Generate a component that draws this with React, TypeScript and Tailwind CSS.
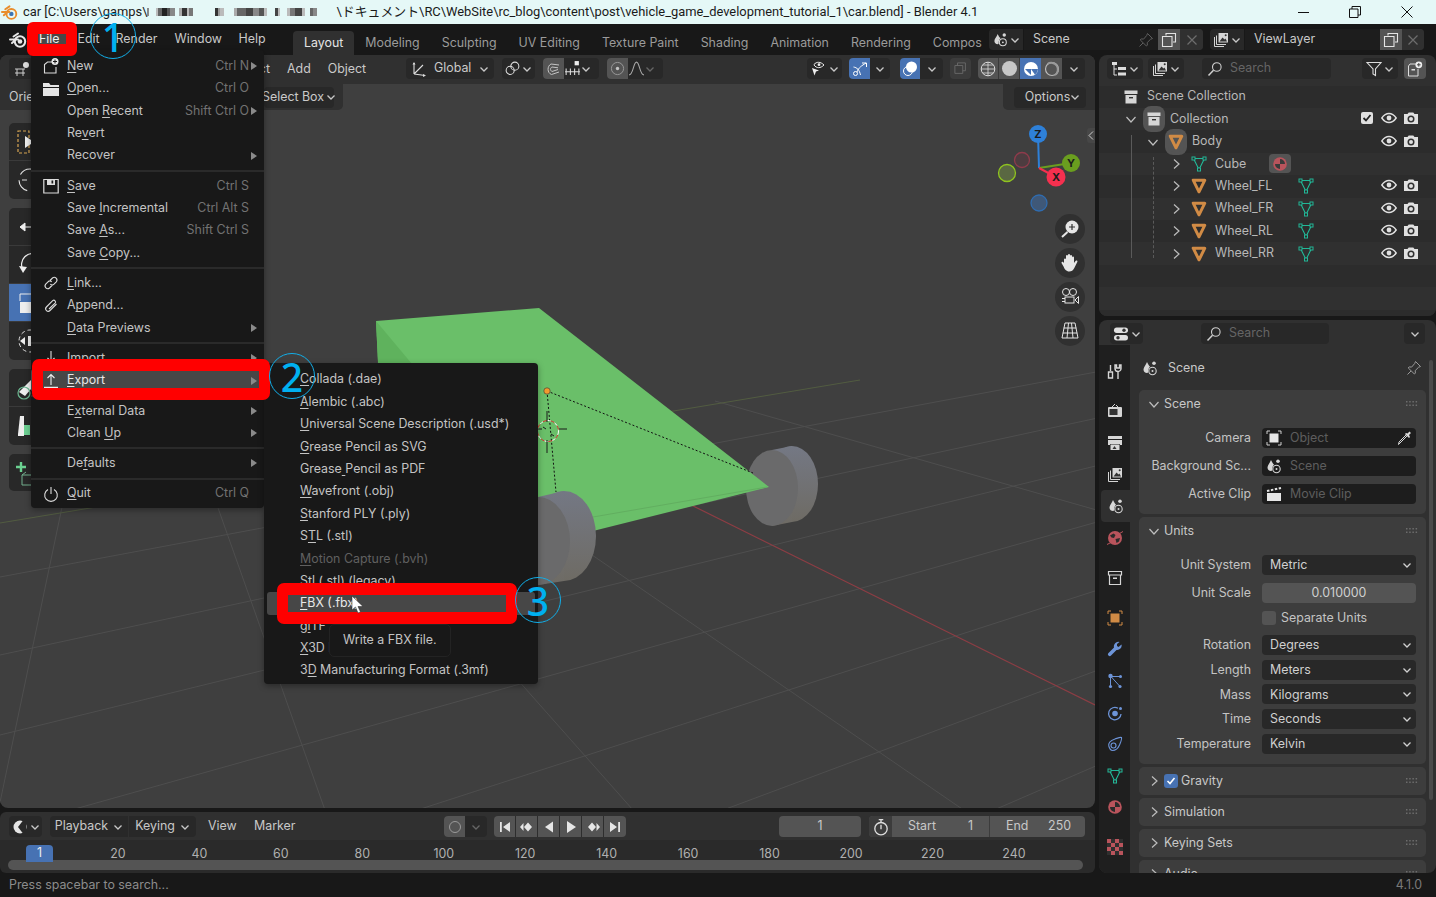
import { ReactNode } from "react";

// ---------- small drawing helpers ----------
function Ico({ s = 16, v = 16, children, className = "" }: { s?: number; v?: number; children: ReactNode; className?: string }) {
  return (
    <svg width={s} height={s} viewBox={`0 0 ${v} ${v}`} fill="none" className={`shrink-0 ${className}`}>
      {children}
    </svg>
  );
}

const W = "#d6d6d6";

function Caret({ c = "#c8c8c8", s = 10 }: { c?: string; s?: number }) {
  return (
    <Ico s={s} v={10}>
      <path d="M1.5 3.5 5 7l3.5-3.5" stroke={c} strokeWidth="1.3" />
    </Ico>
  );
}
function CaretRight({ c = "#bdbdbd" }: { c?: string }) {
  return (
    <Ico s={12} v={12}>
      <path d="M4 1.5 9 6l-5 4.500" stroke={c} strokeWidth="1.2" />
    </Ico>
  );
}
function CaretOpen({ c = "#bdbdbd" }: { c?: string }) {
  return (
    <Ico s={12} v={12}>
      <path d="M1.5 4 6 9l4.500-5" stroke={c} strokeWidth="1.2" />
    </Ico>
  );
}
function BlenderLogo({ c = "#e8e8e8", c2 = "#e8e8e8", s = 18 }: { c?: string; c2?: string; s?: number }) {
  return (
    <Ico s={s} v={18}>
      <circle cx="11" cy="10.5" r="5.2" stroke={c} strokeWidth="2" />
      <circle cx="11" cy="10.5" r="2.3" fill={c2} />
      <path d="M1 8.500h8M4.500 5.500l4.500-3M3 12l4-3.500" stroke={c} strokeWidth="2" strokeLinecap="round" />
    </Ico>
  );
}
function SceneIcon({ c = W, s = 16 }: { c?: string; s?: number }) {
  return (
    <Ico s={s}>
      <path d="M5 2C4 5 1.500 7 1.500 9.500 1.500 11.500 3 13 5 13c.7 0 1-.3 1-.8C6 9 7 8 8 6.500 6.800 5.500 5.800 3.800 5 2Z" fill={c} />
      <circle cx="12" cy="3.200" r="1.800" fill={c} />
      <circle cx="10.500" cy="11" r="3.700" stroke={c} strokeWidth="1.100" />
      <circle cx="10.500" cy="11" r="1" fill={c} />
    </Ico>
  );
}
function ViewLayerIcon({ c = W }: { c?: string }) {
  return (
    <Ico>
      <path d="M1.500 5v9.500H11" stroke={c} strokeWidth="1" />
      <path d="M3.500 3.500v9H13" stroke={c} strokeWidth="1" />
      <rect x="5.500" y="1" width="9.500" height="9.500" fill={c} />
      <path d="m6.500 9.500 3-4 2 2 1-1 1.500 3Z" fill="#333" />
      <circle cx="12.700" cy="3.200" r="1" fill="#333" />
    </Ico>
  );
}
function BoxIcon({ c = W, s = 16 }: { c?: string; s?: number }) {
  return (
    <Ico s={s}>
      <rect x="1.500" y="1.500" width="13" height="3.500" fill={c} />
      <path d="M2.500 6h11v8.500h-11Z" fill={c} />
      <rect x="6" y="8" width="4" height="1.400" fill="#303030" />
    </Ico>
  );
}
function MeshObj({ s = 16 }: { s?: number }) {
  return (
    <Ico s={s}>
      <path d="M2.200 2.200h11.600L8 13.800Z" stroke="#d18b45" strokeWidth="3" strokeLinejoin="round" />
    </Ico>
  );
}
function MeshData({ s = 16 }: { s?: number }) {
  const c = "#22b797";
  return (
    <Ico s={s}>
      <path d="M2.500 2.500h11L8 13.500Z" stroke={c} strokeWidth="1.100" />
      <rect x="1" y="1" width="3" height="3" fill="#2b2b2b" stroke={c} />
      <rect x="12" y="1" width="3" height="3" fill="#2b2b2b" stroke={c} />
      <rect x="6.500" y="12" width="3" height="3" fill="#2b2b2b" stroke={c} />
    </Ico>
  );
}
function MaterialIcon({ s = 16, c = "#b9545c", d = "#2a2a2a" }: { s?: number; c?: string; d?: string }) {
  return (
    <Ico s={s}>
      <circle cx="8" cy="8" r="6.800" fill={c} />
      <path d="M8 8V3a5 5 0 0 1 5 5ZM8 8v5a5 5 0 0 1-5-5Z" fill={d} />
    </Ico>
  );
}
function Eye() {
  return (
    <Ico>
      <path d="M.8 8C3 4.800 5.300 3.500 8 3.500S13 4.800 15.200 8C13 11.200 10.700 12.500 8 12.500S3 11.200.8 8Z" stroke="#e0e0e0" strokeWidth="1.400" />
      <circle cx="8" cy="8" r="2.400" fill="#e0e0e0" />
    </Ico>
  );
}
function Cam() {
  return (
    <Ico>
      <path d="M1 4h3.500l1.200-1.600h4.600L11.500 4H15v10H1Z" fill="#e0e0e0" />
      <circle cx="8" cy="9" r="3.500" fill="#303030" />
      <circle cx="8" cy="9" r="2" fill="#e0e0e0" />
    </Ico>
  );
}
function Grip() {
  return (
    <svg width="12" height="6" viewBox="0 0 12 6" className="shrink-0">
      {[0, 1].map((r) =>
        [0, 1, 2, 3].map((i) => <rect key={`${r}${i}`} x={i * 3.2} y={r * 3.5} width="1.500" height="1.500" fill="#6c6c6c" />),
      )}
    </svg>
  );
}
function SearchGlass() {
  return (
    <Ico>
      <circle cx="9.800" cy="6" r="4.300" stroke="#cfcfcf" strokeWidth="1.100" />
      <path d="M6.500 9.200 1.500 14.500" stroke="#cfcfcf" strokeWidth="1.500" />
    </Ico>
  );
}
function Pin({ c = "#9a9a9a" }: { c?: string }) {
  return (
    <Ico>
      <path d="M9.500 1.500l5 5-2 .8-3.300 3.300.2 2.400-1 1L2.200 7.900l1-1 2.400.2L8.700 3.500ZM5 11l-3.500 3.500" stroke={c} strokeWidth="1" />
    </Ico>
  );
}
function DupIcon() {
  return (
    <Ico>
      <path d="M5 3.500V1.500h9.500V10H12" stroke="#e4e4e4" strokeWidth="1.100" />
      <path d="M1.500 4.500H11V14.500H1.500Z" stroke="#e4e4e4" strokeWidth="1.100" />
    </Ico>
  );
}
function Cross({ c = "#6d6d6d" }: { c?: string }) {
  return (
    <Ico s={12} v={12}>
      <path d="M1.500 1.500l9 9m0-9-9 9" stroke={c} strokeWidth="1.200" />
    </Ico>
  );
}
function Dark({ className = "", children }: { className?: string; children?: ReactNode }) {
  return <div className={`flex h-[21px] items-center justify-center rounded-[4px] bg-[#282828] ${className}`}>{children}</div>;
}

// ---------- menus ----------
type Item = { l: string; u?: number; sc?: string; arrow?: boolean; icon?: ReactNode; dim?: boolean; on?: boolean };

function Label({ it }: { it: Item }) {
  if (it.u === undefined) return <span>{it.l}</span>;
  return (
    <span>
      {it.l.slice(0, it.u)}
      <span className="underline underline-offset-2">{it.l[it.u]}</span>
      {it.l.slice(it.u + 1)}
    </span>
  );
}

const icoStroke = { stroke: "#dcdcdc", strokeWidth: 1.1 };
const fileMenu: Item[][] = [
  [
    {
      l: "New",
      u: 0,
      sc: "Ctrl N",
      arrow: true,
      icon: (
        <Ico>
          <path d="M9 4H4.500L1.500 6.500V15H13V9" {...icoStroke} />
          <circle cx="12" cy="3.500" r="3.500" fill="#e8e8e8" />
          <path d="M12 1.500v4M10 3.500h4" stroke="#181818" strokeWidth="1" />
        </Ico>
      ),
    },
    {
      l: "Open...",
      u: 0,
      sc: "Ctrl O",
      icon: (
        <Ico>
          <path d="M0 2h6l1.500 2H16v2H0Z" fill="#e4e4e4" />
          <rect y="7" width="16" height="8" fill="#e4e4e4" />
        </Ico>
      ),
    },
    { l: "Open Recent", u: 5, sc: "Shift Ctrl O", arrow: true },
    { l: "Revert", u: 2 },
    { l: "Recover", arrow: true },
  ],
  [
    {
      l: "Save",
      u: 0,
      sc: "Ctrl S",
      icon: (
        <Ico>
          <path d="M.8 1.500h14.400v13.500H.8Z" stroke="#dcdcdc" strokeWidth="1.200" />
          <path d="M4 1.500h8v5.500H4Z" fill="#dcdcdc" />
          <rect x="8.500" y="2.500" width="1.700" height="3" fill="#181818" />
        </Ico>
      ),
    },
    { l: "Save Incremental", u: 5, sc: "Ctrl Alt S" },
    { l: "Save As...", u: 5, sc: "Shift Ctrl S" },
    { l: "Save Copy...", u: 5 },
  ],
  [
    {
      l: "Link...",
      u: 0,
      icon: (
        <Ico>
          <path d="M7 5.500 9.500 3a2.700 2.700 0 0 1 3.800 3.800L11 9.200a2.700 2.700 0 0 1-3.700 0M9 10.500 6.500 13a2.700 2.700 0 0 1-3.800-3.800L5 6.800a2.700 2.700 0 0 1 3.700 0" {...icoStroke} />
        </Ico>
      ),
    },
    {
      l: "Append...",
      u: 1,
      icon: (
        <Ico>
          <path d="M13.500 6 7 12.500a2.500 2.500 0 0 1-3.600-3.500l6.300-6.300a1.700 1.700 0 0 1 2.400 2.400L6 11" {...icoStroke} />
        </Ico>
      ),
    },
    { l: "Data Previews", u: 0, arrow: true },
  ],
  [
    {
      l: "Import",
      u: 0,
      arrow: true,
      icon: (
        <Ico>
          <path d="M8 1v10M4.500 8 8 11.500 11.500 8M1 13.500h14" {...icoStroke} />
        </Ico>
      ),
    },
    {
      l: "Export",
      u: 0,
      arrow: true,
      on: true,
      icon: (
        <Ico>
          <path d="M8 12V2M4.500 5 8 1.500 11.500 5" stroke="#eee" strokeWidth="1.100" />
          <path d="M1 14.500h14" stroke="#eee" strokeWidth="1.500" />
        </Ico>
      ),
    },
  ],
  [
    { l: "External Data", u: 1, arrow: true },
    { l: "Clean Up", u: 6, arrow: true },
  ],
  [{ l: "Defaults", u: 2, arrow: true }],
  [
    {
      l: "Quit",
      u: 0,
      sc: "Ctrl Q",
      icon: (
        <Ico>
          <path d="M5 3.500a6.300 6.300 0 1 0 6 0M8 1v7" {...icoStroke} />
        </Ico>
      ),
    },
  ],
];

const exportMenu: Item[] = [
  { l: "Collada (.dae)", u: 0 },
  { l: "Alembic (.abc)", u: 0 },
  { l: "Universal Scene Description (.usd*)", u: 0 },
  { l: "Grease Pencil as SVG", u: 0 },
  { l: "Grease Pencil as PDF", u: 6 },
  { l: "Wavefront (.obj)", u: 0 },
  { l: "Stanford PLY (.ply)", u: 0 },
  { l: "STL (.stl)", u: 1 },
  { l: "Motion Capture (.bvh)", u: 0, dim: true },
  { l: "Stl (.stl) (legacy)", u: 0 },
  { l: "FBX (.fbx)", u: 0, on: true },
  { l: "glTF 2.0 (.glb)", u: 1 },
  { l: "X3D Extensible 3D", u: 0 },
  { l: "3D Manufacturing Format (.3mf)", u: 1 },
];

function FileMenu() {
  return (
    <div className="absolute left-[31px] top-[50px] w-[233px] rounded-b-[4px] rounded-tr-[4px] bg-[#181818] pb-[3px] pt-[5px] shadow-[0_2px_6px_rgba(0,0,0,0.35)]">
      {fileMenu.map((group, gi) => (
        <div key={gi}>
          {gi > 0 && (
            <div className="flex h-[7.800px] items-center">
              <div className="h-[2px] w-full bg-[#2a2a2a]" />
            </div>
          )}
          {group.map((it) => (
            <div key={it.l} className={`flex h-[22.400px] items-center pl-[12px] pr-[6px] text-[12.400px] ${it.on ? "rounded-[3px] bg-[#474747] text-[#e8e8e8]" : "text-[#c4c4c4]"}`}>
              <div className="w-[24px]">{it.icon}</div>
              <Label it={it} />
              <span className={`ml-auto text-[#727272] ${it.sc && !it.arrow ? "mr-[9px]" : ""}`}>{it.sc}</span>
              {it.arrow && (
                <svg width="8" height="10" viewBox="0 0 8 10" className="ml-[1px] shrink-0">
                  <path d="M1 1l6 4-6 4Z" fill="#8a8a8a" />
                </svg>
              )}
            </div>
          ))}
        </div>
      ))}
    </div>
  );
}

function ExportMenu() {
  return (
    <div className="absolute left-[264px] top-[363px] w-[274px] rounded-[4px] bg-[#181818] pb-[2.500px] pt-[5.500px] shadow-[0_2px_6px_rgba(0,0,0,0.35)]">
      {exportMenu.map((it) => (
        <div key={it.l} className={`flex h-[22.400px] items-center whitespace-nowrap text-[12.400px] ${it.on ? "mx-[3px] rounded-[3px] bg-[#474747] pl-[33px] text-[#e8e8e8]" : it.dim ? "pl-[36px] text-[#606060]" : "pl-[36px] text-[#c4c4c4]"}`}>
          <Label it={it} />
        </div>
      ))}
    </div>
  );
}

// ---------- title + top bar ----------
const mosaic: [number, string][] = [
  [2, "#8a8a8a"], [7, "#ffffff00"], [2, "#bbb"], [4, "#666"], [5, "#222"], [3, "#555"], [5, "#888"], [4, "#ffffff00"], [3, "#aaa"], [5, "#333"], [2, "#bbb"], [4, "#777"], [22, "#ffffff00"],
  [3, "#333"], [2, "#999"], [4, "#bbb"], [10, "#ffffff00"], [3, "#aaa"], [9, "#666"], [7, "#444"], [6, "#888"], [5, "#555"], [3, "#bbb"], [8, "#ffffff00"], [3, "#444"], [2, "#bbb"], [7, "#ffffff00"], [3, "#bbb"], [5, "#777"], [7, "#444"], [3, "#bbb"], [5, "#ffffff00"], [3, "#666"], [4, "#888"],
];

function TitleBar() {
  return (
    <div className="flex h-[24px] items-center bg-[#e5f8f7] pl-[1px] text-[12.900px] text-[#1a1a1a] [font-family:Roboto,'Noto_Sans_CJK_JP',sans-serif]">
      <BlenderLogo c="#e98d2c" c2="#3a74b4" s={17} />
      <span className="ml-[5px] whitespace-nowrap">car [C:\Users\gamps\</span>
      <span className="flex h-[10px] w-[189px] items-center overflow-hidden">
        {mosaic.map(([w, c], i) => (
          <span key={i} className="h-[8px] shrink-0" style={{ width: w, background: c }} />
        ))}
      </span>
      <span className="whitespace-nowrap">\ドキュメント\RC\WebSite\rc_blog\content\post\vehicle_game_development_tutorial_1\car.blend] - Blender 4.1</span>
      <div className="ml-auto flex items-center">
        <div className="flex w-[51px] justify-center">
          <div className="h-px w-[11px] bg-[#111]" />
        </div>
        <div className="flex w-[52px] justify-center">
          <Ico s={12} v={12}>
            <path d="M.5 3h8.500v8.500H.5Z M3 3V.5h8.500V9H9" stroke="#111" strokeWidth="1" />
          </Ico>
        </div>
        <div className="mr-[3px] flex w-[52px] justify-center">
          <Ico s={12} v={12}>
            <path d="M.5.5l11 11m0-11-11 11" stroke="#111" strokeWidth="1" />
          </Ico>
        </div>
      </div>
    </div>
  );
}

const tabs = ["Layout", "Modeling", "Sculpting", "UV Editing", "Texture Paint", "Shading", "Animation", "Rendering", "Compositing"];

function SceneField({ icon, name, pin }: { icon: ReactNode; name: string; pin?: boolean }) {
  return (
    <div className="flex h-[21px] w-[214px] items-stretch overflow-hidden rounded-[4px] bg-[#282828]">
      <div className="flex w-[35px] items-center justify-center gap-[2px] border-r border-[#181818]">
        {icon}
        <Caret />
      </div>
      <div className={`flex items-center pl-[9px] pr-[4px] ${pin ? "w-[134px]" : "w-[135px]"} bg-[#1d1d1d]`}>
        <span>{name}</span>
        {pin && (
          <span className="ml-auto">
            <Pin c="#5e5e5e" />
          </span>
        )}
      </div>
      <div className="flex w-[22px] items-center justify-center bg-[#545454]">
        <DupIcon />
      </div>
      <div className="flex flex-1 items-center justify-center bg-[#303030]">
        <Cross />
      </div>
    </div>
  );
}

function TopBar() {
  return (
    <div className="flex h-[31px] items-center bg-[#181818] text-[12.400px] text-[#c9c9c9]">
      <div className="flex w-[30px] justify-center pl-[5px]">
        <BlenderLogo />
      </div>
      <div className="flex w-[263px] items-center">
        <span className="ml-[1px] rounded-[3px] bg-[#474747] px-[8px] text-[#f0f0f0]">File</span>
        <span className="ml-[10px] w-[38px]">Edit</span>
        <span className="w-[59px]">Render</span>
        <span className="w-[64px]">Window</span>
        <span>Help</span>
      </div>
      <div className="flex h-[24px] w-[689px] self-end overflow-hidden">
        {tabs.map((t, i) => (
          <div key={t} className={`flex items-center whitespace-nowrap rounded-t-[4px] px-[11px] ${i === 0 ? "bg-[#303030] text-[#e4e4e4]" : "text-[#9b9b9b]"}`}>
            {t}
          </div>
        ))}
      </div>
      <div className="ml-[7px] flex items-center gap-[7px]">
        <SceneField icon={<SceneIcon s={15} />} name="Scene" pin />
        <SceneField icon={<ViewLayerIcon />} name="ViewLayer" />
      </div>
    </div>
  );
}

// ---------- viewport ----------
function ToolGroup({ children }: { children: ReactNode }) {
  return <div className="flex w-[36px] flex-col overflow-hidden rounded-[5px] bg-[#282828]">{children}</div>;
}
function ToolBtn({ children, on }: { children: ReactNode; on?: boolean }) {
  return <div className={`flex h-[38px] items-center border-b border-[#3a3a3a] pl-[7px] last:border-b-0 ${on ? "bg-[#4772b3]" : ""}`}>{children}</div>;
}

// family of lines going to a vanishing point
const vpA = { x: 2700, y: 72 };
const vpB = { x: 120, y: 231 };
const gridA = [577, 655, 735, 830, 945, 1080, 1240];
const gridB = [-0.21, 0.354, 0.886, 1.457, 3.5, 6.2];

function Scene3D() {
  return (
    <svg width="1095" height="753" viewBox="0 55 1095 753" className="absolute inset-0">
      <defs>
        <linearGradient id="tread" x1="0" y1="0" x2="0" y2="1">
          <stop offset="0" stopColor="#747884" />
          <stop offset="1" stopColor="#6e6b64" />
        </linearGradient>
      </defs>
      <g stroke="#4e4e4e" strokeWidth="1">
        {gridA.map((c) => (
          <line key={c} x1="0" y1={c} x2="1095" y2={c - ((c - vpA.y) / vpA.x) * 1095} />
        ))}
        {gridB.map((k) => (
          <line key={k} x1={vpB.x + k * 170} y1={vpB.y + 170} x2={vpB.x + k * 600} y2={vpB.y + 600} />
        ))}
      </g>
      <line x1="0" y1="523" x2="860" y2="380" stroke="#525c41" strokeWidth="1" />
      <line x1="675" y1="497" x2="1095" y2="705" stroke="#8d3d44" strokeWidth="1.2" />

      {/* right wheel */}
      <ellipse cx="792" cy="484" rx="26" ry="38" fill="url(#tread)" />
      <path d="M772 450 792 446 792 522 772 526Z" fill="url(#tread)" />
      <ellipse cx="772" cy="488" rx="26" ry="38" fill="#6a6a6b" />

      {/* body */}
      <path d="M376 321 539 308 769 487 593 531 530 540 380 400Z" fill="#6abf69" />
      <path d="M376 321 412 364 378 364Z" fill="#5fb25d" />
      <path d="M593 517 767 487" stroke="#62ae60" strokeWidth="1" />

      {/* left wheel */}
      <ellipse cx="564" cy="536" rx="32" ry="45" fill="url(#tread)" />
      <path d="M538 497 564 491 564 581 538 585Z" fill="url(#tread)" />
      <ellipse cx="538" cy="541" rx="32" ry="44" fill="#6a6a6b" />

      {/* empties + 3d cursor */}
      <path d="M547 391 753 473M547 391 556 492" stroke="#111" strokeWidth="1" strokeDasharray="2 2" />
      <circle cx="547" cy="391" r="3.200" fill="#f29a2e" stroke="#333" strokeWidth="0.6" />
      <circle cx="548" cy="431" r="10.500" fill="none" stroke="#fff" strokeWidth="1" strokeDasharray="4 4" />
      <circle cx="548" cy="431" r="10.500" fill="none" stroke="#d33" strokeWidth="1" strokeDasharray="4 4" strokeDashoffset="4" />
      <path d="M547 411v11M547 440v13M559 429h8M536 429h6M543 427l3 2M551 434l3 2" stroke="#1a1a1a" strokeWidth="1" />

      {/* nav gizmo */}
      <line x1="1039" y1="168" x2="1038" y2="134" stroke="#2e80d8" strokeWidth="2" />
      <line x1="1039" y1="168" x2="1071" y2="163" stroke="#6a9e1f" strokeWidth="2" />
      <line x1="1039" y1="168" x2="1056" y2="177" stroke="#f5304f" strokeWidth="2" />
      <circle cx="1022" cy="160" r="7.500" fill="#4d3c40" stroke="#8e3b4b" strokeWidth="1.3" />
      <circle cx="1007" cy="173" r="8.500" fill="#5a6842" stroke="#8fc31f" strokeWidth="1.3" />
      <circle cx="1039" cy="203" r="8" fill="#3f5878" stroke="#2f6cb0" strokeWidth="1.3" />
      <circle cx="1038" cy="134" r="9" fill="#2e80d8" />
      <circle cx="1071" cy="163" r="9" fill="#6a9e1f" />
      <circle cx="1056" cy="177" r="9.500" fill="#f5304f" />
      <g fontSize="11" fontWeight="700" fill="#1c1c1c" textAnchor="middle" fontFamily="Inter">
        <text x="1038" y="138">Z</text>
        <text x="1071" y="167">Y</text>
        <text x="1056" y="181">X</text>
      </g>
    </svg>
  );
}

function NavBtn({ children }: { children: ReactNode }) {
  return <div className="flex size-[30px] items-center justify-center rounded-full bg-[#303030]">{children}</div>;
}

function Viewport() {
  return (
    <div className="relative flex flex-1 flex-col overflow-hidden rounded-[8px] bg-[#3f3f3f] text-[12.400px] text-[#cacaca]">
      <Scene3D />
      {/* header */}
      <div className="relative flex h-[29px] shrink-0 items-start bg-[#303030] pt-[3px] [&>*]:h-[21px] [&>span]:leading-[21px]">
        <Dark className="ml-[9px] w-[44px] justify-start pl-[5px]">
          <Ico>
            <circle cx="12" cy="4" r="3" fill="#ddd" />
            <path d="M1 8h10M3 8v7M9 8v7M1 12h10" stroke="#ccc" strokeWidth="1" />
          </Ico>
        </Dark>
        <div className="w-[217px] whitespace-nowrap text-right leading-[21px]">Select</div>
        <div className="flex w-[136px] gap-[17px] pl-[17px] leading-[21px]">
          <span>Add</span>
          <span>Object</span>
        </div>
        <Dark className="w-[88px] justify-start pl-[5px] pr-[5px]">
          <Ico>
            <path d="M3 13V2M3 13l11 1.500M3 13l9-9" stroke="#ddd" strokeWidth="1.100" />
            <path d="M3 1 1.500 3.500h3ZM15 14.500l-3-1.500v3Z" fill="#ddd" />
          </Ico>
          <span className="ml-[7px]">Global</span>
          <span className="ml-auto">
            <Caret />
          </span>
        </Dark>
        <Dark className="ml-[8px] w-[33px] gap-[2px]">
          <Ico s={15}>
            <circle cx="5.500" cy="10" r="4.300" stroke="#ddd" strokeWidth="1.100" />
            <circle cx="10.500" cy="5.500" r="4.300" stroke="#ddd" strokeWidth="1.100" />
          </Ico>
          <Caret />
        </Dark>
        <Dark className="ml-[8px] w-[56px] justify-start overflow-hidden">
          <div className="flex h-full w-[21px] items-center justify-center bg-[#545454]">
            <Ico s={16}>
              <path d="M13 11 5.500 13.500C1 12 1 5 5 3l8 1M12 8.500l-6 2C4 9.500 4 7 6 6l6 .8" stroke="#c4c4c4" strokeWidth="1" />
            </Ico>
          </div>
          <Ico s={17}>
            <rect x="10" y="1" width="4" height="4" fill="#eee" />
            <path d="M1 11h14M2 8v6M6 8v6M10 8v6M14 8v6" stroke="#ddd" strokeWidth="1" />
          </Ico>
          <Caret />
        </Dark>
        <Dark className="ml-[8px] w-[56px] justify-start overflow-hidden">
          <div className="flex h-full w-[21px] items-center justify-center bg-[#545454]">
            <Ico s={15}>
              <circle cx="8" cy="8" r="6.500" stroke="#9c9c9c" />
              <circle cx="8" cy="8" r="1.800" fill="#c4c4c4" />
            </Ico>
          </div>
          <Ico s={17}>
            <path d="M1 14C5 14 5 2 8 2s3 12 7 12" stroke="#aaa" strokeWidth="1" />
          </Ico>
          <Caret c="#666" />
        </Dark>
        <div className="ml-[144px] flex items-center">
          <Dark className="w-[35px] gap-[3px]">
            <Ico>
              <path d="M2 7l7 2.500-3 1-1.500 4Z" fill="#eee" />
              <path d="M4 3.500C6.500 .5 10.500 .5 14 4c-3.500 3.500-7.500 3.500-10 0Z" stroke="#eee" strokeWidth="1" />
              <circle cx="9" cy="3.700" r="1.400" fill="#eee" />
            </Ico>
            <Caret />
          </Dark>
          <Dark className="ml-[7px] w-[41px] overflow-hidden">
            <div className="flex h-full w-[21px] items-center justify-center bg-[#4772b3]">
              <Ico>
                <circle cx="3.500" cy="12.500" r="2" stroke="#fff" />
                <path d="M5 11C7 6 9.500 5 14 2M10 2h4.500v4M1.500 6c3.500 .5 6 3 7 8" stroke="#fff" strokeWidth="1" />
              </Ico>
            </div>
            <div className="flex flex-1 justify-center">
              <Caret />
            </div>
          </Dark>
          <Dark className="ml-[10px] w-[43px] overflow-hidden">
            <div className="flex h-full w-[20px] items-center justify-center bg-[#4772b3]">
              <Ico>
                <circle cx="6" cy="10" r="4.500" stroke="#fff" />
                <circle cx="9.500" cy="6" r="5.500" fill="#fff" />
              </Ico>
            </div>
            <div className="flex flex-1 justify-center">
              <Caret />
            </div>
          </Dark>
          <div className="ml-[7px] flex h-[21px] w-[21px] items-center justify-center rounded-[4px] bg-[#3c3c3c]">
            <Ico s={14}>
              <path d="M4 4V1h9v9h-3M1 4h9v9H1Z" stroke="#6c6c6c" />
            </Ico>
          </div>
          <div className="ml-[7px] flex h-[21px] w-[107px] items-stretch overflow-hidden rounded-[4px] bg-[#282828]">
            <div className="flex w-[21px] items-center justify-center border-r border-[#3a3a3a] bg-[#545454]">
              <Ico>
                <circle cx="8" cy="8" r="6.800" stroke="#ddd" />
                <path d="M1.200 8h13.600M8 1.200v13.600M3 4h10M3 12h10" stroke="#ddd" strokeWidth="0.8" />
              </Ico>
            </div>
            <div className="flex w-[21px] items-center justify-center border-r border-[#3a3a3a] bg-[#545454]">
              <div className="size-[15px] rounded-full bg-[#c8c8c8]" />
            </div>
            <div className="flex w-[21px] items-center justify-center bg-[#4772b3]">
              <Ico>
                <circle cx="8" cy="8" r="7" fill="#fff" />
                <path d="M8 8h7a7 7 0 0 1-3 5.700ZM2 8h6v6" fill="#4772b3" />
              </Ico>
            </div>
            <div className="flex w-[21px] items-center justify-center bg-[#545454]">
              <Ico>
                <circle cx="8" cy="8" r="6.500" stroke="#bbb" strokeWidth="1.200" />
                <path d="M11 14A6.500 6.500 0 0 0 3.500 3" stroke="#999" strokeWidth="2" />
              </Ico>
            </div>
            <div className="flex flex-1 items-center justify-center">
              <Caret />
            </div>
          </div>
        </div>
      </div>

      {/* tool settings */}
      <div className="relative flex h-[26px] shrink-0 items-stretch justify-between">
        <div className="flex w-[343px] items-center rounded-br-[5px] bg-[#303030] pl-[9px]">
          <span>Orientation</span>
          <Dark className="ml-auto mr-[9px] h-[20px] w-[70px] gap-[2px]">
            <span className="whitespace-nowrap">Select Box</span>
            <Caret />
          </Dark>
        </div>
        <div className="flex w-[92px] items-center justify-end rounded-bl-[5px] bg-[#303030] pr-[9px]">
          <Dark className="h-[20px] w-[72px] justify-between pl-[8px] pr-[3px]">
            <span>Options</span>
            <Caret />
          </Dark>
        </div>
      </div>

      {/* toolbar + nav buttons */}
      <div className="relative flex flex-1 justify-between">
        <div className="flex flex-col gap-[9px] pl-[9px] pt-[13px]">
          <ToolGroup>
            <ToolBtn>
              <Ico s={24} v={24}>
                <rect x="2" y="1" width="11" height="22" stroke="#d8a552" strokeWidth="1.2" strokeDasharray="3 2" />
                <path d="M9 6l9 6-9 6Z" fill="#eee" />
              </Ico>
            </ToolBtn>
            <ToolBtn>
              <Ico s={24} v={24}>
                <circle cx="14" cy="12" r="11" stroke="#e6e6e6" strokeWidth="1.1" strokeDasharray="14 6" />
                <path d="M6 12h5" stroke="#ddd" strokeWidth="1.1" />
              </Ico>
            </ToolBtn>
          </ToolGroup>
          <ToolGroup>
            <ToolBtn>
              <Ico s={24} v={24}>
                <path d="M4 12h14M4 12l5-4v8Z" stroke="#eee" fill="#eee" />
              </Ico>
            </ToolBtn>
            <ToolBtn>
              <Ico s={24} v={24}>
                <path d="M22 2A11 11 0 0 0 7 17" stroke="#eee" strokeWidth="1.2" />
                <path d="M3 13l8 1-4 6Z" fill="#eee" />
              </Ico>
            </ToolBtn>
            <ToolBtn on>
              <Ico s={24} v={24}>
                <path d="M4 10V3h14" stroke="#eee" />
                <rect x="4" y="11" width="16" height="11" fill="#eee" />
              </Ico>
            </ToolBtn>
            <ToolBtn>
              <Ico s={24} v={24}>
                <circle cx="14" cy="12" r="11" stroke="#ddd" strokeDasharray="4 3" />
                <path d="M4 12l5-4v8Z" fill="#eee" />
                <rect x="12" y="7" width="10" height="10" fill="#eee" />
              </Ico>
            </ToolBtn>
          </ToolGroup>
          <ToolGroup>
            <ToolBtn>
              <Ico s={24} v={24}>
                <path d="M3 16 16 3l5 3L9 20Z" fill="#eee" />
                <circle cx="8" cy="17" r="6" stroke="#6bb790" strokeWidth="1.2" />
              </Ico>
            </ToolBtn>
            <ToolBtn>
              <Ico s={24} v={24}>
                <path d="M4 2h4v20H2v-2" fill="#eee" />
                <rect x="8" y="11" width="6" height="10" fill="#6dd092" />
              </Ico>
            </ToolBtn>
          </ToolGroup>
          <ToolGroup>
            <div className="flex h-[37px] items-center pl-[6px]">
              <Ico s={26} v={26}>
                <path d="M6 2v10M1 7h10" stroke="#6bd191" strokeWidth="2.4" />
                <path d="M7 15h15v10H7Z M11 12l-4 3" stroke="#72b08e" strokeWidth="1" />
              </Ico>
            </div>
          </ToolGroup>
        </div>
        <div className="flex flex-col gap-[4px] pr-[10px] pt-[104px]">
          <NavBtn>
            <Ico s={22} v={22}>
              <circle cx="13" cy="9" r="6.500" fill="#e6e6e6" />
              <path d="M13 6v6M10 9h6" stroke="#303030" strokeWidth="1.2" />
              <path d="M8.500 14 3 19" stroke="#e6e6e6" strokeWidth="2" />
            </Ico>
          </NavBtn>
          <NavBtn>
            <Ico s={22} v={22}>
              <path d="M5 11V7.500a1 1 0 0 1 2 0V4a1 1 0 0 1 2 0V3a1 1 0 0 1 2 0v1a1 1 0 0 1 2 0v1.500a1 1 0 0 1 2 0V11l1.500-2a1 1 0 0 1 1.800 1l-3 6c-1 2.500-3 3.500-5 3.500-3 0-5-2.500-5.500-4.500L2.500 11a1 1 0 0 1 2-.5Z" fill="#e6e6e6" />
            </Ico>
          </NavBtn>
          <NavBtn>
            <Ico s={22} v={22}>
              <circle cx="7" cy="6" r="3.500" stroke="#e4e4e4" />
              <circle cx="14" cy="6" r="3.500" stroke="#e4e4e4" />
              <rect x="6" y="11" width="9" height="6" stroke="#e4e4e4" />
              <path d="M3 12.500h3M3 15.500h3M19.500 10.500 16 14l3.500 3.500Z" stroke="#e4e4e4" />
            </Ico>
          </NavBtn>
          <NavBtn>
            <Ico s={22} v={22}>
              <path d="M6 3h10l3 15H3ZM4.700 8h12.600M3.800 13h14.400M9.500 3 8 18M12.500 3 14 18" stroke="#e4e4e4" />
            </Ico>
          </NavBtn>
        </div>
        {/* region toggle */}
        <div className="absolute right-0 top-[18px] flex h-[15px] w-[8px] items-center justify-center rounded-l-[3px] bg-[#474747]">
          <svg width="6" height="9" viewBox="0 0 6 9">
            <path d="M5 .5 1 4.500 5 8.500" stroke="#ccc" fill="none" />
          </svg>
        </div>
      </div>
    </div>
  );
}

// ---------- timeline ----------
const frames = [20, 40, 60, 80, 100, 120, 140, 160, 180, 200, 220, 240];

function TransportIcon({ d }: { d: string }) {
  return (
    <div className="flex w-[22px] items-center justify-center border-r border-[#2d2d2d] last:border-r-0">
      <Ico s={14} v={14}>
        <path d={d} fill="#e6e6e6" />
      </Ico>
    </div>
  );
}

function Timeline() {
  return (
    <div className="flex h-[61px] shrink-0 flex-col overflow-hidden rounded-[6px] text-[12.400px] text-[#c8c8c8]">
      <div className="flex h-[28px] items-center bg-[#303030] pt-[1px]">
        <Dark className="ml-[9px] w-[33px] gap-[2px]">
          <Ico>
            <circle cx="8" cy="8" r="6.500" fill="#e6e6e6" />
            <path d="M11 1.500 6 8l5 6.500h3V1.500Z" fill="#282828" />
          </Ico>
          <Caret />
        </Dark>
        <Dark className="ml-[8px] w-[79px] gap-[5px] rounded-r-none border-r border-[#303030]">
          <span>Playback</span>
          <Caret />
        </Dark>
        <Dark className="w-[67px] gap-[5px] rounded-l-none">
          <span>Keying</span>
          <Caret />
        </Dark>
        <span className="ml-[12px] w-[46px]">View</span>
        <span className="w-[190px]">Marker</span>
        <div className="flex h-[21px] w-[43px] items-stretch overflow-hidden rounded-[4px] bg-[#282828]">
          <div className="flex w-[21px] items-center justify-center bg-[#545454]">
            <div className="size-[12px] rounded-full border border-[#9a9a9a]" />
          </div>
          <div className="flex flex-1 items-center justify-center">
            <Caret c="#666" />
          </div>
        </div>
        <div className="ml-[7px] flex h-[21px] items-stretch overflow-hidden rounded-[4px] bg-[#545454]">
          <TransportIcon d="M2 2h1.800v10H2ZM12 2v10L5 7Z" />
          <TransportIcon d="M0 7l3.500-4v8ZM4 7l4-4.500L12 7l-4 4.500Z" />
          <TransportIcon d="M11 1.500v11L3 7Z" />
          <TransportIcon d="M3 1v12l9-6Z" />
          <TransportIcon d="M14 7l-3.500-4v8ZM10 7 6 2.500 2 7l4 4.500Z" />
          <TransportIcon d="M12 2h-1.800v10H12ZM2 2v10l7-5Z" />
        </div>
        <div className="ml-[153px] flex h-[21px] w-[82px] items-center justify-center rounded-[4px] bg-[#545454]">1</div>
        <div className="ml-[8px] flex h-[21px] w-[216px] items-stretch overflow-hidden rounded-[4px] bg-[#545454]">
          <div className="flex w-[23px] items-center justify-center bg-[#3c3c3c]">
            <Ico s={18}>
              <circle cx="8" cy="9.500" r="5.500" stroke="#ddd" strokeWidth="1.200" />
              <path d="M8 6v4M6 1.500h4M8 1.500V4" stroke="#ddd" strokeWidth="1.200" />
            </Ico>
          </div>
          <div className="flex w-[98px] items-center justify-between border-r border-[#3c3c3c] px-[16px]">
            <span>Start</span>
            <span>1</span>
          </div>
          <div className="flex flex-1 items-center justify-between px-[16px] pr-[14px]">
            <span>End</span>
            <span>250</span>
          </div>
        </div>
      </div>
      <div className="relative flex-1 bg-[#2a2a2a]">
        <div className="relative h-[20px]">
          {frames.map((f) => (
            <span key={f} className="absolute top-[5px] -translate-x-1/2 text-[#b0b0b0]" style={{ left: 36.5 + f * 4.0727 }}>
              {f}
            </span>
          ))}
        </div>
        <div className="ml-[8px] mr-[12px] h-[10px] rounded-full bg-[#545454]" />
        <div className="absolute left-[26px] top-[5px] flex h-[17px] w-[27px] items-center justify-center rounded-t-[4px] bg-[#4772b3] text-[#eee]">1</div>
      </div>
    </div>
  );
}

// ---------- outliner ----------
type Row = { name: string; pad: string; chev?: "open" | "closed"; icon: ReactNode; active?: boolean; extra?: ReactNode; nameW?: string; eye?: boolean; check?: boolean };
const wheel = (name: string): Row => ({ name, pad: "pl-[69px]", chev: "closed", icon: <MeshObj />, extra: <MeshData />, nameW: "w-[83px]", eye: true });

const rows: Row[] = [
  { name: "Scene Collection", pad: "pl-[24px]", icon: <BoxIcon /> },
  { name: "Collection", pad: "pl-[24px]", chev: "open", icon: <BoxIcon />, active: true, eye: true, check: true },
  { name: "Body", pad: "pl-[46px]", chev: "open", icon: <MeshObj />, active: true, eye: true },
  {
    name: "Cube",
    pad: "pl-[69px]",
    chev: "closed",
    icon: <MeshData />,
    nameW: "w-[54px]",
    extra: (
      <div className="flex h-[19px] w-[22px] items-center justify-center rounded-[4px] bg-[#545454]">
        <MaterialIcon s={16} d="#3a3a3a" />
      </div>
    ),
  },
  wheel("Wheel_FL"),
  wheel("Wheel_FR"),
  wheel("Wheel_RL"),
  wheel("Wheel_RR"),
];

function Outliner() {
  return (
    <div className="relative flex h-[261px] shrink-0 flex-col overflow-hidden rounded-[8px] bg-[#303030] text-[12.400px] text-[#b8b8b8]">
      <div className="flex h-[30.600px] shrink-0 items-start pt-[3px]">
        <Dark className="ml-[8px] w-[36px] gap-[2px]">
          <Ico>
            <rect x="1" y="1" width="5" height="3" fill="#ddd" />
            <path d="M3 4v10h3M3 8h3" stroke="#ddd" />
            <rect x="7" y="6" width="8" height="3" fill="#ddd" />
            <rect x="7" y="11.500" width="8" height="3" fill="#ddd" />
          </Ico>
          <Caret />
        </Dark>
        <Dark className="ml-[5px] w-[36px] gap-[2px]">
          <ViewLayerIcon />
          <Caret />
        </Dark>
        <Dark className="ml-[18px] w-[129px] justify-start gap-[7px] bg-[#1d1d1d] pl-[5px] text-[#656565]">
          <SearchGlass />
          <span>Search</span>
        </Dark>
        <Dark className="ml-[31px] w-[36px] gap-[2px]">
          <Ico>
            <path d="M1 1.500h14L9.500 8v6.500L7 13V8Z" stroke="#ddd" strokeWidth="1.100" />
          </Ico>
          <Caret />
        </Dark>
        <div className="ml-[6px] flex h-[21px] w-[22px] items-center justify-center rounded-[4px] bg-[#545454]">
          <Ico>
            <path d="M9 3H3L1.500 5v10H11V8" stroke="#ddd" />
            <rect x="4.500" y="8" width="3.500" height="1.500" fill="#ddd" />
            <circle cx="11.800" cy="3.800" r="3.400" fill="#eee" />
            <path d="M11.800 2v3.600M10 3.800h3.600" stroke="#444" />
          </Ico>
        </div>
      </div>
      <div className="relative flex-1">
        {rows.map((r, i) => (
          <div key={r.name} className={`flex h-[22.400px] items-center ${r.pad} pr-[17px] ${i % 2 === 0 ? "bg-[#2c2c2c]" : "bg-[#303030]"}`}>
            {r.chev && <div className="flex w-[23px] pl-[2px]">{r.chev === "open" ? <CaretOpen /> : <CaretRight />}</div>}
            <div className={`mr-[8px] flex h-[20px] w-[16px] items-center justify-center ${r.active ? "rounded-[5px] bg-[#545454] shadow-[0_0_0_3px_#545454]" : ""}`}>{r.icon}</div>
            <span className={`whitespace-nowrap ${r.nameW ?? ""}`}>{r.name}</span>
            {r.extra}
            <div className="ml-auto flex -translate-y-[1px] items-center gap-[6px]">
              {r.check && (
                <div className="mr-[2px] flex size-[12px] items-center justify-center rounded-[2px] bg-[#e0e0e0]">
                  <svg width="10" height="10" viewBox="0 0 10 10">
                    <path d="M1.500 5 4 7.500 8.500 2" stroke="#222" strokeWidth="1.800" fill="none" />
                  </svg>
                </div>
              )}
              {r.eye && <Eye />}
              {r.eye && <Cam />}
            </div>
          </div>
        ))}
        {[0, 1, 2].map((i) => (
          <div key={i} className={`h-[22.400px] ${i % 2 === 0 ? "bg-[#2c2c2c]" : "bg-[#303030]"}`} />
        ))}
        {/* hierarchy lines */}
        <div className="absolute left-[32px] top-[49px] h-[123px] w-px bg-[#5a5a5a]" />
        <div className="absolute left-[54px] top-[71px] h-[101px] border-l border-dashed border-[#5a5a5a]" />
      </div>
    </div>
  );
}

// ---------- properties ----------
const c = { blue: "#6d94d8", green: "#22b797", red: "#b9545c" };

function TabRow({ children, on, sep }: { children: ReactNode; on?: boolean; sep?: string }) {
  return <div className={`flex h-[31.600px] items-center justify-center ${on ? "ml-[2px] rounded-l-[4px] bg-[#303030]" : ""} ${sep ?? ""}`}>{children}</div>;
}

function PropTabs() {
  return (
    <div className="flex w-[31px] shrink-0 flex-col bg-[#1f1f1f] pt-[11px]">
      <TabRow sep="mb-[8px]">
        <Ico>
          <path d="M3.500 1v6M1.500 8h4v6h-4ZM11 7V15M8 1v3.500a3 3 0 0 0 6 0V1l-1.500 0v3h-3V1Z" stroke={W} strokeWidth="1.400" />
        </Ico>
      </TabRow>
      <TabRow>
        <Ico>
          <rect x="1" y="4" width="14" height="10" rx="1" fill={W} />
          <path d="M5 4 8 1M11 4 9 2" stroke={W} />
          <rect x="2.500" y="6" width="8" height="6" fill="#333" />
        </Ico>
      </TabRow>
      <TabRow>
        <Ico>
          <rect x="1" y="1" width="14" height="3" fill={W} />
          <path d="M1 5h14v5h-2v-1H3v1H1Z" fill={W} />
          <path d="M3.500 9.500h9V15h-9Z" fill={W} />
          <path d="m5.500 14 2-3 2 3Z" fill="#333" />
        </Ico>
      </TabRow>
      <TabRow>
        <ViewLayerIcon />
      </TabRow>
      <TabRow on>
        <SceneIcon />
      </TabRow>
      <TabRow sep="mb-[8.400px]">
        <Ico>
          <circle cx="8" cy="8" r="7" fill={c.red} />
          <path d="M3 5.500 6.500 3.500 8.500 5 7 8 4.500 7.500ZM8.500 9l4.500-1-1 3.500L9.500 13Z" fill="#2a2a2a" />
          <path d="M0 14.500l4-2M16 1.500l-3.500 2" stroke={c.red} />
        </Ico>
      </TabRow>
      <TabRow sep="mb-[8.400px]">
        <Ico>
          <path d="M1.500 1.500h13v3.500h-13ZM2.500 5v9.500h11V5" stroke={W} strokeWidth="1.200" />
          <rect x="6" y="7.500" width="4" height="1.500" fill={W} />
        </Ico>
      </TabRow>
      <TabRow>
        <Ico>
          <rect x="3.500" y="3.500" width="9" height="9" fill="#d18b45" />
          <path d="M1 4V1h3M12 1h3v3M1 12v3h3M12 15h3v-3" stroke="#d18b45" />
        </Ico>
      </TabRow>
      <TabRow>
        <Ico>
          <path d="M14.500 3.500 11.500 6 10 5 10 3 12.500 1A4.500 4.500 0 0 0 7 6.500L1.500 12a1.700 1.700 0 0 0 2.500 2.500l5.500-5.500a4.500 4.500 0 0 0 5-5.500Z" fill={c.blue} />
        </Ico>
      </TabRow>
      <TabRow>
        <Ico>
          <circle cx="3.500" cy="3" r="2.200" fill={c.blue} />
          <circle cx="3.500" cy="13.500" r="1.600" fill={c.blue} />
          <circle cx="13" cy="13.500" r="1.600" fill={c.blue} />
          <circle cx="13.500" cy="3.500" r="1.500" fill={c.blue} />
          <path d="M3.500 3v10M3.500 3 13 13.500M3.500 3.500h10" stroke={c.blue} />
        </Ico>
      </TabRow>
      <TabRow>
        <Ico>
          <circle cx="8" cy="8.500" r="2.800" fill={c.blue} />
          <path d="M11 3.300A6.200 6.200 0 1 0 14 9" stroke={c.blue} strokeWidth="1.300" />
          <circle cx="13.500" cy="3.500" r="1.500" fill={c.blue} />
        </Ico>
      </TabRow>
      <TabRow>
        <Ico>
          <path d="M1.800 10C1 6.500 4 4.500 8 3c3-1 5-2 6.500-1.500 .5 2-1 5-2 7.500-1.500 3.500-4 5.500-7 5.500-1.500 0-3-2-3.700-4.500Z" stroke={c.blue} strokeWidth="1.100" />
          <circle cx="6.500" cy="9.500" r="2.500" stroke={c.blue} strokeWidth="1.100" />
        </Ico>
      </TabRow>
      <TabRow>
        <MeshData />
      </TabRow>
      <TabRow sep="mb-[8.400px]">
        <MaterialIcon />
      </TabRow>
      <TabRow>
        <svg width="16" height="16" viewBox="0 0 4 4" shapeRendering="crispEdges">
          <rect width="4" height="4" fill={c.red} />
          <path d="M1 0h1v1H1ZM3 0h1v1H3ZM0 1h1v1H0ZM2 1h1v1H2ZM1 2h1v1H1ZM3 2h1v1H3ZM0 3h1v1H0ZM2 3h1v1H2Z" fill="#2f2f2f" />
        </svg>
      </TabRow>
    </div>
  );
}

function FieldRow({ label, children, gap = "mb-[8px]" }: { label?: string; children: ReactNode; gap?: string }) {
  return (
    <div className={`flex h-[20px] items-center ${gap}`}>
      <div className="w-[112px] whitespace-nowrap pt-[1px] text-right text-[#c4c4c4]">{label}</div>
      <div className="ml-[11px] w-[154px]">{children}</div>
    </div>
  );
}

function Select({ v }: { v: string }) {
  return (
    <div className="flex h-[20px] items-center justify-between rounded-[4px] bg-[#282828] pl-[8px] pr-[4px] text-[#d0d0d0]">
      <span className="pt-[1px]">{v}</span>
      <Caret c="#d0d0d0" />
    </div>
  );
}

function Holder({ icon, v, tail }: { icon: ReactNode; v: string; tail?: ReactNode }) {
  return (
    <div className="flex h-[20px] items-center rounded-[4px] bg-[#1d1d1d] pl-[4px] pr-[3px] text-[#5d5d5d]">
      {icon}
      <span className="ml-[8px] pt-[1px]">{v}</span>
      {tail && <span className="ml-auto">{tail}</span>}
    </div>
  );
}

function PanelHead({ title, open, check }: { title: string; open?: boolean; check?: boolean }) {
  return (
    <div className="flex h-[28px] items-center pl-[9px] pr-[8px] text-[#c8c8c8]">
      <div className="w-[16px]">{open ? <CaretOpen /> : <CaretRight />}</div>
      {check && (
        <div className="mr-[3px] flex size-[14px] items-center justify-center rounded-[3px] bg-[#4772b3]">
          <svg width="10" height="10" viewBox="0 0 10 10">
            <path d="M1.500 5 4 7.500 8.500 2" stroke="#fff" strokeWidth="1.6" fill="none" />
          </svg>
        </div>
      )}
      <span className="pt-[1px]">{title}</span>
      <span className="ml-auto">
        <Grip />
      </span>
    </div>
  );
}

function Properties() {
  return (
    <div className="relative flex flex-1 flex-col overflow-hidden rounded-[8px] bg-[#303030] text-[12.400px]">
      <div className="flex h-[25px] shrink-0 items-center pt-[2px]">
        <Dark className="ml-[11px] w-[33px] gap-[2px]">
          <Ico>
            <rect x="1" y="1.500" width="14" height="5.500" rx="2.700" fill="#e0e0e0" />
            <rect x="1" y="9" width="14" height="5.500" rx="2.700" fill="#e0e0e0" />
            <circle cx="11" cy="4.200" r="1.700" fill="#333" />
            <circle cx="5" cy="11.800" r="1.700" fill="#333" />
          </Ico>
          <Caret />
        </Dark>
        <Dark className="ml-[58px] w-[128px] justify-start gap-[7px] bg-[#1d1d1d] pl-[5px] text-[#656565]">
          <SearchGlass />
          <span>Search</span>
        </Dark>
        <Dark className="ml-[75px] w-[21px]">
          <Caret />
        </Dark>
      </div>
      <div className="flex min-h-0 flex-1">
        <PropTabs />
        <div className="flex-1">
          <div className="flex h-[45px] items-center pl-[12px] pr-[14px] text-[#c8c8c8]">
            <SceneIcon />
            <span className="ml-[10px] pt-[1px]">Scene</span>
            <span className="ml-auto">
              <Pin />
            </span>
          </div>
          <div className="ml-[9px] flex w-[287px] flex-col gap-[3px]">
            <div className="rounded-[5px] bg-[#3d3d3d]">
              <PanelHead title="Scene" open />
              <div className="pb-[2px] pt-[10px]">
                <FieldRow label="Camera">
                  <Holder
                    icon={
                      <Ico>
                        <rect x="3.500" y="3.500" width="9" height="9" fill="#e6e6e6" />
                        <path d="M1 4V1h3M12 1h3v3M1 12v3h3M12 15h3v-3" stroke="#d0d0d0" />
                      </Ico>
                    }
                    v="Object"
                    tail={
                      <Ico>
                        <path d="M10 6 3 13l-1.500 1.500L2 12 9 5" stroke="#d8d8d8" />
                        <path d="M8 4l4 4 1-1-1-2 2-2-1.500-1.500-2 2L9 3Z" fill="#d8d8d8" />
                      </Ico>
                    }
                  />
                </FieldRow>
                <FieldRow label="Background Sc...">
                  <Holder icon={<SceneIcon />} v="Scene" />
                </FieldRow>
                <FieldRow label="Active Clip">
                  <Holder
                    icon={
                      <Ico>
                        <rect x="1" y="7" width="14" height="8" fill="#e6e6e6" />
                        <path d="M1 5 15 2" stroke="#e6e6e6" strokeWidth="2" strokeDasharray="2.500 1.500" />
                      </Ico>
                    }
                    v="Movie Clip"
                  />
                </FieldRow>
              </div>
            </div>
            <div className="rounded-[5px] bg-[#3d3d3d]">
              <PanelHead title="Units" open />
              <div className="pb-[2px] pt-[10px]">
                <FieldRow label="Unit System">
                  <Select v="Metric" />
                </FieldRow>
                <FieldRow label="Unit Scale" gap="mb-[5px]">
                  <div className="flex h-[20px] items-center justify-center rounded-[4px] bg-[#545454] text-[#d0d0d0]">0.010000</div>
                </FieldRow>
                <FieldRow gap="mb-[7px]">
                  <div className="flex items-center gap-[5px] text-[#c4c4c4]">
                    <div className="size-[14px] rounded-[3px] bg-[#545454]" />
                    <span>Separate Units</span>
                  </div>
                </FieldRow>
                <FieldRow label="Rotation" gap="mb-[4.700px]">
                  <Select v="Degrees" />
                </FieldRow>
                <FieldRow label="Length" gap="mb-[4.700px]">
                  <Select v="Meters" />
                </FieldRow>
                <FieldRow label="Mass" gap="mb-[4.700px]">
                  <Select v="Kilograms" />
                </FieldRow>
                <FieldRow label="Time" gap="mb-[4.700px]">
                  <Select v="Seconds" />
                </FieldRow>
                <FieldRow label="Temperature" gap="mb-[8px]">
                  <Select v="Kelvin" />
                </FieldRow>
              </div>
            </div>
            <div className="rounded-[5px] bg-[#3d3d3d]">
              <PanelHead title="Gravity" check />
            </div>
            <div className="rounded-[5px] bg-[#3d3d3d]">
              <PanelHead title="Simulation" />
            </div>
            <div className="rounded-[5px] bg-[#3d3d3d]">
              <PanelHead title="Keying Sets" />
            </div>
            <div className="rounded-[5px] bg-[#3d3d3d]">
              <PanelHead title="Audio" />
            </div>
          </div>
        </div>
      </div>
      {/* scrollbar */}
      <div className="absolute right-[3px] top-[40px] h-[440px] w-[4px] rounded-full bg-[#4a4a4a]" />
    </div>
  );
}

// ---------- annotations on top of the capture ----------
function Number({ n, className }: { n: string; className: string }) {
  return (
    <div className={`absolute flex size-[46px] items-center justify-center rounded-full border-[1.500px] border-[#12aee8] text-[39px] font-medium leading-none text-[#00b0f0] [font-family:'Noto_Sans',sans-serif] ${className}`}>
      {n}
    </div>
  );
}

export default function App() {
  return (
    <div className="relative flex h-[897px] w-[1436px] flex-col overflow-hidden bg-[#181818] [font-family:Inter,'Noto_Sans',sans-serif]">
      <TitleBar />
      <TopBar />
      <div className="flex min-h-0 flex-1 gap-[4px]">
        <div className="flex w-[1095px] flex-col gap-[4px]">
          <Viewport />
          <Timeline />
        </div>
        <div className="flex flex-1 flex-col gap-[4px]">
          <Outliner />
          <Properties />
        </div>
      </div>
      <div className="flex h-[24px] shrink-0 items-center justify-between pl-[9px] pr-[14px] text-[12.400px] text-[#8c8c8c]">
        <span>Press spacebar to search...</span>
        <span className="text-[#7a7a7a]">4.1.0</span>
      </div>

      <FileMenu />
      <ExportMenu />

      {/* tooltip */}
      <div className="absolute left-[329px] top-[624px] flex h-[33px] w-[122px] items-center rounded-[5px] border border-[#232323] bg-[#181818] pl-[13px] text-[12.400px] text-[#c4c4c4]">
        Write a FBX file.
      </div>

      {/* red highlights */}
      <div className="absolute left-[27px] top-[22px] h-[34px] w-[50px] rounded-[6px] border-x-[11px] border-y-[12px] border-[#ff0000]" />
      <div className="absolute left-[32px] top-[359px] h-[41px] w-[238px] rounded-[7px] border-x-[11px] border-y-[12px] border-[#ff0000]" />
      <div className="absolute left-[277px] top-[583px] h-[41px] w-[240px] rounded-[7px] border-x-[11px] border-y-[12px] border-[#ff0000]" />

      <Number n="1" className="left-[90px] top-[13px]" />
      <Number n="2" className="left-[269px] top-[353px]" />
      <Number n="3" className="left-[515px] top-[577px]" />

      {/* mouse cursor */}
      <svg width="14" height="18" viewBox="0 0 14 18" className="absolute left-[351px] top-[596px]">
        <path d="M1 0v14l3.500-3 2.500 6 2.500-1-2.500-5.500H12Z" fill="#fff" stroke="#222" strokeWidth="0.5" />
      </svg>
    </div>
  );
}
